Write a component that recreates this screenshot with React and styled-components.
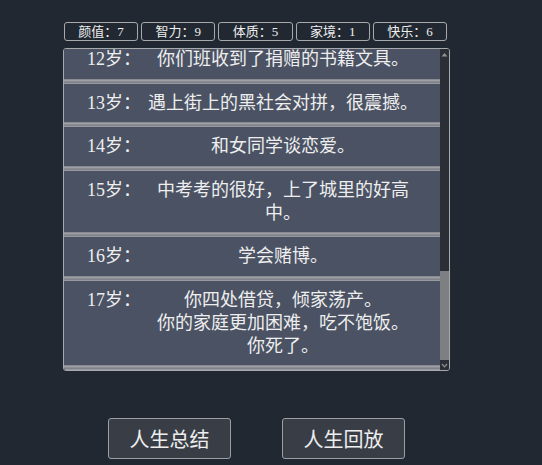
import { useEffect, useRef, useState } from "react";
import styled, { createGlobalStyle } from "styled-components";

const GlobalStyle = createGlobalStyle`
  body {
    margin: 0;
    background: #222831;
    font-family: "Liberation Serif", "Noto Sans CJK SC", serif;
    color: #eeeeee;
  }
`;

const stats = [
  { name: "颜值", value: 7 },
  { name: "智力", value: 9 },
  { name: "体质", value: 5 },
  { name: "家境", value: 1 },
  { name: "快乐", value: 6 },
];

const trajectory = [
  { age: 0, text: "你出生了，是个男孩。出生在农村，家里很穷。" },
  { age: 1, text: "你学会了走路，摔了好几跤，膝盖上留了一道疤。" },
  { age: 2, text: "你生了一场大病，家里四处借钱给你看病，总算挺了过来。" },
  { age: 3, text: "你学会了说话，第一句是“妈妈”。" },
  { age: 4, text: "爷爷带你去村口看了一场露天电影，你看得入了迷。" },
  { age: 5, text: "父母外出打工，你成了留守儿童，跟着奶奶生活。" },
  { age: 6, text: "你上了村里的小学。" },
  { age: 7, text: "你在河边玩水，差点淹死，被路过的大叔救了上来。" },
  { age: 8, text: "你被同学欺负了，不敢告诉家里人。" },
  { age: 9, text: "你考试得了第一名，老师在全班同学面前表扬了你。" },
  { age: 10, text: "奶奶生病住院了，你每天放学去看她。" },
  { age: 11, text: "你喜欢上了看武侠小说，常常看到半夜。" },
  { age: 12, text: "你们班收到了捐赠的书籍文具。" },
  { age: 13, text: "遇上街上的黑社会对拼，很震撼。" },
  { age: 14, text: "和女同学谈恋爱。" },
  { age: 15, text: "中考考的很好，上了城里的好高中。" },
  { age: 16, text: "学会赌博。" },
  { age: 17, text: ["你四处借贷，倾家荡产。", "你的家庭更加困难，吃不饱饭。", "你死了。"] },
];

const Page = styled.div`
  padding: 22px 0 0 63px;
  width: 387px;
`;

const StatRow = styled.div`
  display: flex;
  gap: 3px;
  width: 383px;
  margin-left: 1px;
`;

const StatBox = styled.div`
  flex: 1;
  height: 19px;
  box-sizing: border-box;
  border: 1px solid #a7a9ad;
  border-radius: 3px;
  font-size: 13px;
  line-height: 17px;
  text-align: center;
  color: #eeeeee;
`;

const Frame = styled.div`
  display: flex;
  margin-top: 7px;
  height: 323px;
  box-sizing: border-box;
  border: 1px solid #a7a9ad;
  border-radius: 3px;
  overflow: hidden;
`;

const List = styled.ul`
  flex: 1;
  list-style: none;
  margin: 0;
  padding: 0;
  overflow-y: scroll;
  scrollbar-width: none;
`;

const Scrollbar = styled.div`
  flex: none;
  width: 9px;
  display: flex;
  flex-direction: column;
  background: #2b2e35;
`;

const Arrow = styled.div`
  height: 10px;
  display: flex;
  align-items: center;
  justify-content: center;
`;

const Track = styled.div`
  flex: 1;
  position: relative;
`;

const Thumb = styled.div`
  position: absolute;
  left: 0;
  right: 0;
  background: #7e7f83;
`;

const Item = styled.li`
  display: flex;
  align-items: flex-start;
  padding: 8px 15px 12.5px 23px;
  background: #4a5263;
  font-size: 18px;
  line-height: 23px;
  position: relative;

  &::after {
    content: "";
    position: absolute;
    left: 0;
    right: 0;
    bottom: 0;
    height: 5px;
    background: linear-gradient(
      #777b82 0%,
      #a3a5a9 25%,
      #8a8d93 50%,
      #6f737a 62%,
      #9fa1a5 85%,
      #878a90 100%
    );
  }
`;

const Age = styled.span`
  flex: none;
  width: 54px;
  white-space: nowrap;
`;

const Content = styled.span`
  flex: 1;
  text-align: center;
`;

const ButtonRow = styled.div`
  display: flex;
  justify-content: center;
  gap: 51px;
  margin-top: 47px;
`;

const Button = styled.button`
  width: 123px;
  height: 41px;
  background: #393e46;
  border: 1px solid #9c9ea3;
  border-radius: 3px;
  color: #eeeeee;
  font-family: "Noto Sans CJK SC", sans-serif;
  font-size: 20px;
  padding: 0;
  cursor: pointer;
`;

export default function App() {
  const listRef = useRef(null);
  const [thumb, setThumb] = useState({ top: 75, height: 25 });

  useEffect(() => {
    const el = listRef.current;
    if (!el) return;
    el.scrollTop = el.scrollHeight;
    const ratio = el.clientHeight / el.scrollHeight;
    const pos = el.scrollTop / (el.scrollHeight - el.clientHeight || 1);
    const h = Math.max(ratio * 100, 8);
    setThumb({ top: (100 - h) * pos, height: h });
  }, []);

  return (
    <Page>
      <GlobalStyle />
      <StatRow>
        {stats.map((s) => (
          <StatBox key={s.name}>
            {s.name}：{s.value}
          </StatBox>
        ))}
      </StatRow>
      <Frame>
        <List ref={listRef}>
          {trajectory.map((t) => (
            <Item key={t.age}>
              <Age>{t.age}岁：</Age>
              <Content>
                {Array.isArray(t.text)
                  ? t.text.map((line, i) => <div key={i}>{line}</div>)
                  : t.text}
              </Content>
            </Item>
          ))}
        </List>
        <Scrollbar>
          <Arrow>
            <svg width="7" height="5" viewBox="0 0 7 5">
              <path d="M0.5 4.5 L3.5 1 L6.5 4.5 Z" fill="#8e9095" />
            </svg>
          </Arrow>
          <Track>
            <Thumb style={{ top: `${thumb.top}%`, height: `${thumb.height}%` }} />
          </Track>
          <Arrow>
            <svg width="7" height="5" viewBox="0 0 7 5">
              <path d="M1 1 L3.5 3.8 L6 1" fill="none" stroke="#8e9095" strokeWidth="1.2" />
            </svg>
          </Arrow>
        </Scrollbar>
      </Frame>
      <ButtonRow>
        <Button>人生总结</Button>
        <Button>人生回放</Button>
      </ButtonRow>
    </Page>
  );
}
